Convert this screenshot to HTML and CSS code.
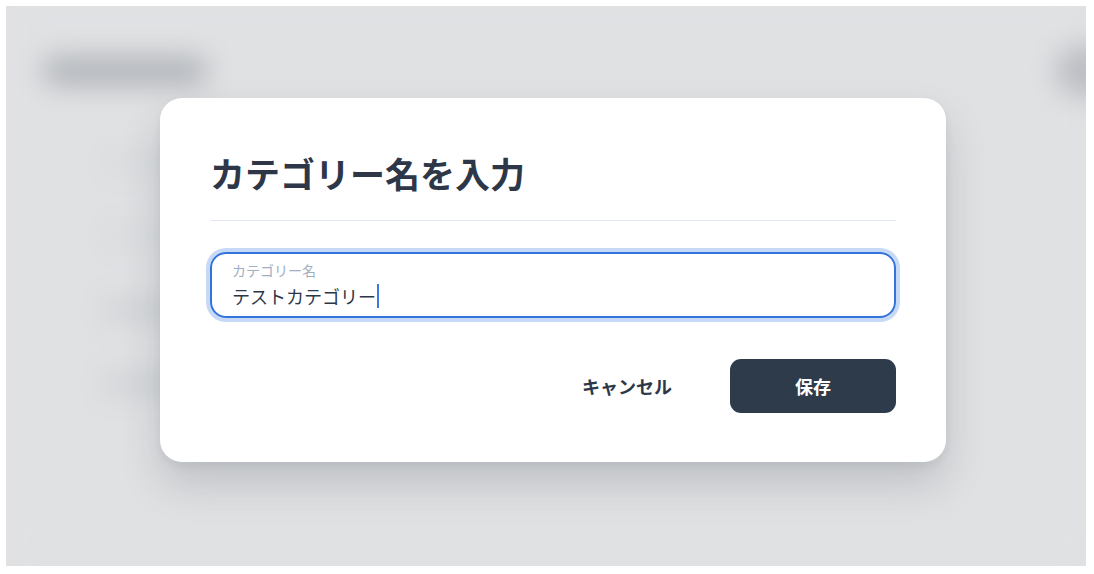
FILE: index.html
```html
<!DOCTYPE html>
<html lang="ja">
<head>
<meta charset="utf-8">
<title>カテゴリー名を入力</title>
<link rel="stylesheet" href="styles.css">
</head>
<body>
<div class="frame">
  <div class="stage">
    <div class="bg-app" aria-hidden="true">
      <div class="bg-header">
        <div class="bg-title"></div>
        <div class="bg-avatar"></div>
      </div>
      <div class="bg-list">
        <div class="bg-row"><div class="bg-label light"></div></div>
        <div class="bg-row"><div class="bg-label light"></div></div>
        <div class="bg-row"><div class="bg-label"></div></div>
        <div class="bg-row"><div class="bg-label"></div></div>
      </div>
    </div>
    <div class="overlay">
      <div class="dialog" role="dialog">
        <h2 class="dialog-title">カテゴリー名を入力</h2>
        <div class="divider"></div>
        <div class="field">
          <span class="field-label">カテゴリー名</span>
          <span class="field-value">テストカテゴリー<span class="caret"></span></span>
        </div>
        <div class="actions">
          <button class="btn btn-cancel">キャンセル</button>
          <button class="btn btn-save">保存</button>
        </div>
      </div>
    </div>
  </div>
</div>
</body>
</html>
```

FILE: styles.css
```css
* { box-sizing: border-box; }
html, body { margin: 0; padding: 0; background: #ffffff; }
body {
  font-family: "Noto Sans CJK JP", "Noto Sans", sans-serif;
  width: 1094px;
  height: 574px;
  overflow: hidden;
}
.frame {
  padding: 6px 8px 8px 6px;
  background: #ffffff;
}
.stage {
  position: relative;
  width: 1080px;
  height: 560px;
  overflow: hidden;
  background: #e0e1e3;
}

/* blurred background app */
.bg-app {
  filter: blur(14px);
  height: 100%;
  background: #e0e1e3;
}
.bg-header {
  display: flex;
  justify-content: space-between;
  align-items: center;
  padding: 40px 0 0 36px;
  height: 90px;
}
.bg-title {
  width: 166px;
  height: 28px;
  border-radius: 14px;
  background: #aeb2b7;
}
.bg-avatar {
  width: 60px;
  height: 52px;
  border-radius: 26px;
  background: #b9bcc1;
  margin-right: -30px;
}
.bg-list {
  margin: 30px 0 0 40px;
  display: flex;
  flex-direction: column;
}
.bg-row {
  height: 74px;
  border-bottom: 2px solid #d9dbde;
  display: flex;
  align-items: center;
  padding-left: 55px;
}
.bg-label {
  width: 90px;
  height: 14px;
  border-radius: 7px;
  background: #c8cbcf;
}
.bg-label.light { background: #d6d8db; }

/* modal */
.overlay {
  position: absolute;
  inset: 0;
  display: flex;
  align-items: flex-start;
  padding: 92px 0 0 154px;
}
.dialog {
  width: 786px;
  height: 364px;
  background: #ffffff;
  border-radius: 22px;
  padding: 52px 50px 0 50px;
  box-shadow: 0 22px 40px rgba(40, 48, 60, 0.18), 0 4px 10px rgba(40, 48, 60, 0.06);
}
.dialog-title {
  margin: 0;
  font-size: 35px;
  line-height: 46px;
  font-weight: 700;
  color: #2d3748;
  letter-spacing: 0;
}
.divider {
  height: 1px;
  background: #e2e8f0;
  margin-top: 24px;
}
.field {
  margin-top: 31px;
  height: 66px;
  border: 2px solid #3273dc;
  border-radius: 16px;
  box-shadow: 0 0 0 4px rgba(66, 133, 230, 0.3);
  padding: 6px 0 0 20px;
  display: flex;
  flex-direction: column;
}
.field-label {
  font-size: 14px;
  line-height: 20px;
  color: #a0aec0;
}
.field-value {
  font-size: 18px;
  line-height: 28px;
  margin-top: 2px;
  color: #2d3748;
  display: flex;
  align-items: center;
}
.caret {
  display: inline-block;
  width: 1.5px;
  height: 24px;
  background: #3b7be0;
  margin-left: 1px;
}
.actions {
  display: flex;
  justify-content: flex-end;
  gap: 20px;
  margin-top: 41px;
}
.btn {
  font-family: inherit;
  font-size: 18px;
  font-weight: 700;
  border: none;
  height: 54px;
  width: 166px;
  border-radius: 11px;
  cursor: pointer;
}
.btn-cancel {
  background: transparent;
  color: #2d3748;
}
.btn-save {
  background: #2e3b4a;
  color: #ffffff;
}
```
